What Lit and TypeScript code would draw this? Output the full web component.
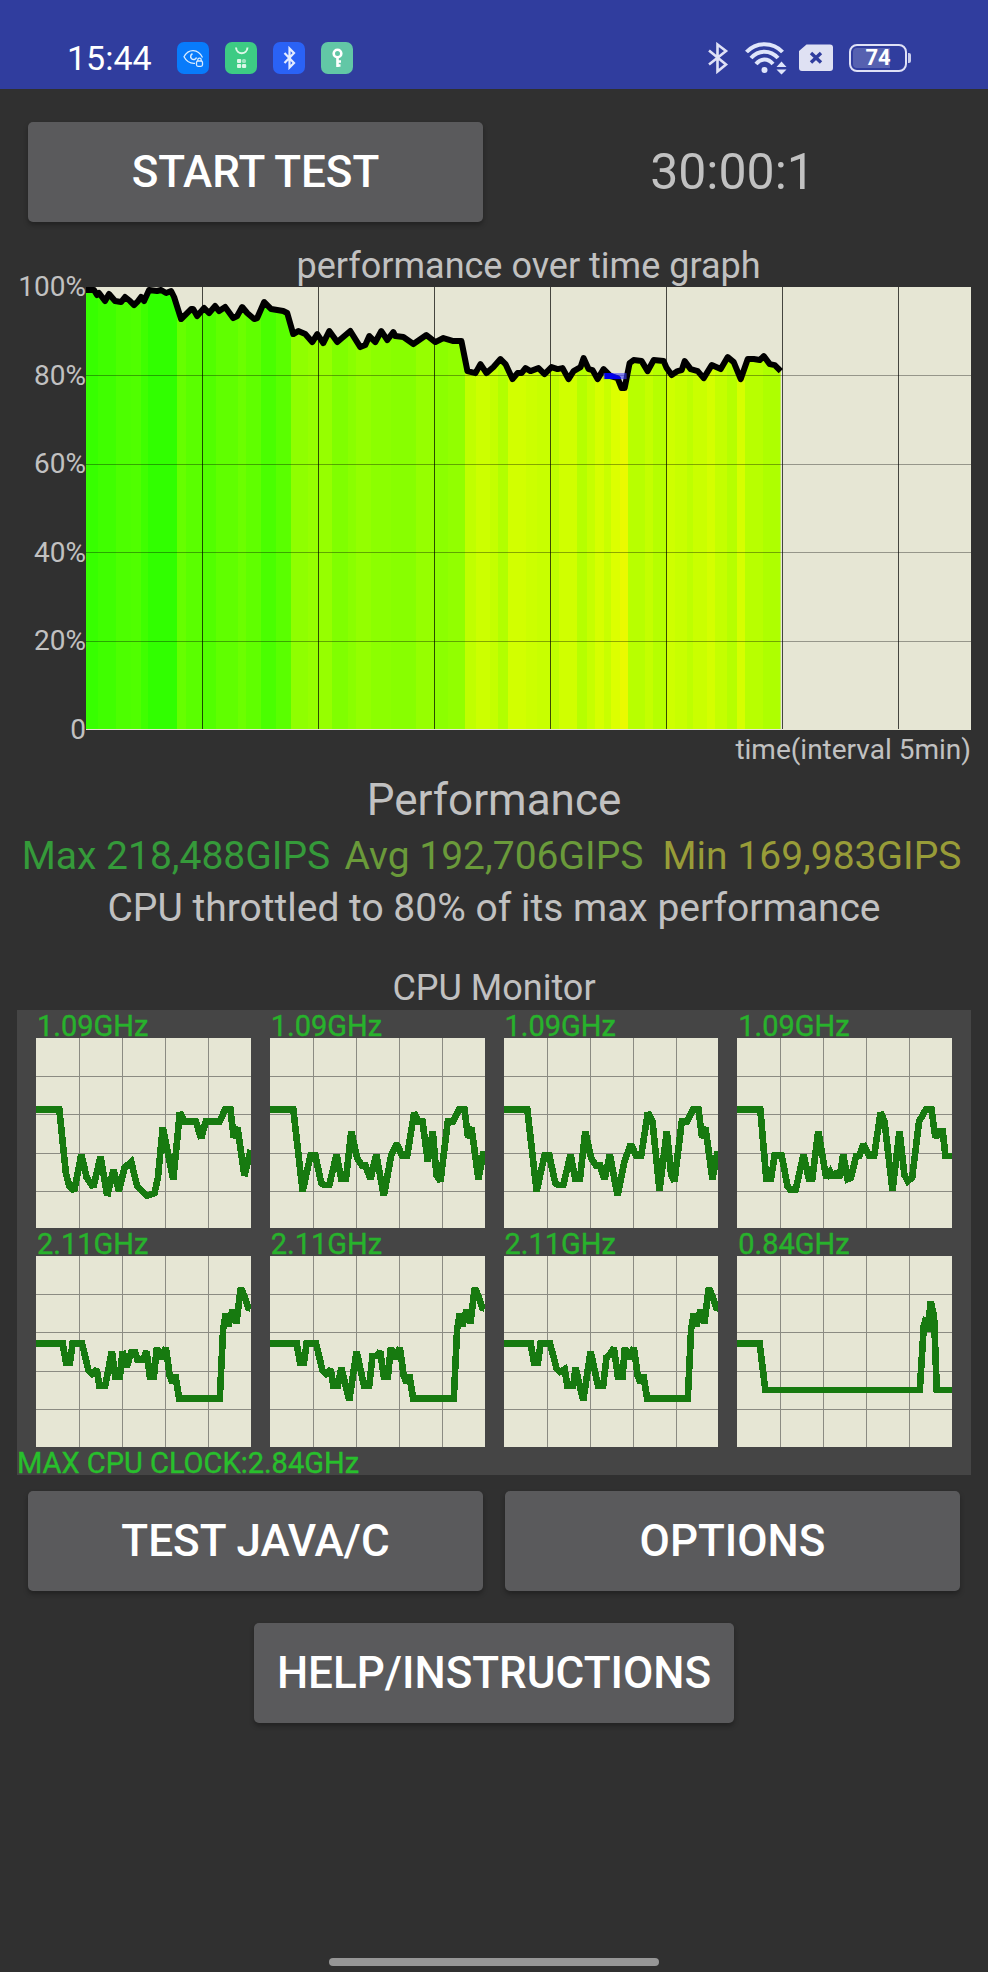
import { LitElement, html, svg, css } from "lit";
import { customElement, property } from "lit/decorators.js";

interface Core {
  clock: string;
  trace: string;
}

const TAIL_ROW1 = "534,250 550,250 568,214 584,214 595,300 605,268 626,424 640,350 645,350";
const TAIL_ROW2 =
  "363,276 374,308 390,276 402,362 410,380 418,356 430,428 552,428 562,220 570,172 578,210 590,162 602,202 615,96 626,120 638,156 645,158";

const CORES: Core[] = [
  {
    clock: "1.09GHz",
    trace:
      "0,214 70,214 90,408 100,444 115,459 136,350 152,418 172,448 194,356 214,474 233,396 249,460 266,390 286,372 304,446 332,474 356,466 366,420 381,268 412,426 432,224 446,250 480,250 496,302 510,250 552,250 568,214 584,214 594,300 605,268 626,414 642,348 645,350",
  },
  {
    clock: "1.09GHz",
    trace:
      "0,214 70,214 98,460 122,352 136,352 154,436 163,442 178,442 200,350 214,424 228,424 244,280 262,362 276,382 286,382 302,424 319,350 342,474 364,352 381,318 397,354 412,354 433,224 445,250 458,250 474,370 489,280 500,412 512,430 " +
      TAIL_ROW1,
  },
  {
    clock: "1.09GHz",
    trace:
      "0,214 70,214 98,460 122,352 136,352 154,436 163,442 178,442 200,350 214,424 228,424 244,280 262,362 276,382 288,382 302,424 318,350 341,474 362,370 381,318 397,354 412,354 432,224 446,250 467,458 489,280 502,412 512,430 " +
      TAIL_ROW1,
  },
  {
    clock: "1.09GHz",
    trace:
      "0,214 70,214 88,424 102,424 113,352 134,352 152,446 160,456 176,456 200,350 216,424 226,424 244,280 268,420 280,402 290,420 300,402 308,420 319,350 332,424 342,420 358,354 368,354 379,318 397,354 412,354 431,224 443,250 467,458 488,280 503,412 513,430 526,420 547,250 568,214 584,214 596,300 606,272 611,300 617,272 626,354 645,354",
  },
  {
    clock: "2.11GHz",
    trace:
      "0,262 80,262 90,320 102,320 110,262 138,262 158,345 168,354 182,340 190,388 208,388 228,286 238,362 252,362 260,286 272,334 286,290 298,290 304,310 322,310 332,286 342,362 354,362 " +
      TAIL_ROW2,
  },
  {
    clock: "2.11GHz",
    trace:
      "0,262 80,262 90,320 102,320 110,262 138,262 158,345 168,354 182,340 190,388 204,388 214,336 238,434 260,286 282,388 298,388 308,300 322,300 331,286 342,362 354,362 " +
      TAIL_ROW2,
  },
  {
    clock: "2.11GHz",
    trace:
      "0,262 80,262 90,320 102,320 110,262 138,262 158,338 168,348 182,340 190,388 208,388 215,336 238,434 260,286 282,388 298,388 308,304 318,296 330,276 342,362 356,362 " +
      TAIL_ROW2,
  },
  {
    clock: "0.84GHz",
    trace:
      "0,262 68,262 85,402 549,402 561,210 568,184 573,226 582,136 592,184 600,402 645,402",
  },
];

const PERFORMANCE =
  "0,3 8,3 11,8 13,6 19,14 23,7 29,14 35,15 39,10 44,14 48,18 52,14 55,10 58,14 63,3 71,4 75,3 80,6 85,4 88,10 95,32 99,28 105,22 107,22 111,29 118,21 123,26 129,19 133,24 139,20 147,31 151,29 156,20 161,26 168,32 171,31 178,15 185,22 197,24 201,26 207,47 212,44 219,47 226,55 231,47 237,56 243,44 251,55 264,44 274,60 279,58 283,49 289,55 295,44 301,53 307,45 309,49 317,50 327,57 340,48 349,55 357,51 367,54 375,54 381,84 389,86 394,77 400,86 407,80 414,72 419,77 426,92 431,86 435,86 439,81 444,84 452,81 458,87 465,80 471,82 476,81 482,92 487,84 494,80 497,71 502,82 506,83 511,92 517,82 524,89 531,91 535,101 538,101 543,76 547,73 555,74 561,84 567,73 577,74 580,81 585,88 591,84 595,83 598,74 604,82 611,84 617,91 625,78 634,82 641,70 647,75 654,92 661,72 667,72 673,73 677,69 683,77 688,78 694,84";

const BANDS: [number, string][] = [
  [0, "#37ff00"], [12, "#40ff00"], [30, "#4dff00"], [45, "#50ff00"], [55, "#3fff00"],
  [62, "#31ff00"], [91, "#66ff00"], [100, "#5aff00"], [116, "#52ff00"], [130, "#60ff00"],
  [152, "#6cff00"], [160, "#60ff00"], [175, "#4aff00"], [190, "#5aff00"], [205, "#8fff00"],
  [222, "#96ff00"], [246, "#80ff00"], [262, "#8aff00"], [270, "#94ff00"], [285, "#8cff00"],
  [305, "#88ff00"], [330, "#96ff00"], [348, "#8cff00"], [362, "#92ff00"], [379, "#c0ff00"],
  [390, "#ccff00"], [404, "#c4ff00"], [412, "#b2ff00"], [422, "#d2ff00"], [440, "#ccff00"],
  [450, "#c8ff00"], [465, "#c0ff00"], [472, "#d0ff00"], [490, "#b6ff00"], [500, "#c6ff00"],
  [508, "#d6ff00"], [517, "#c8ff00"], [524, "#dcff00"], [533, "#eafa00"], [541, "#b8ff00"],
  [558, "#c4ff00"], [566, "#b6ff00"], [580, "#ceff00"], [588, "#c8ff00"], [600, "#beff00"],
  [606, "#caff00"], [620, "#d4ff00"], [628, "#c4ff00"], [640, "#b6ff00"], [650, "#d6ff00"],
  [658, "#b8ff00"], [676, "#aeff00"],
];
const RUN_END = 694;

@customElement("performance-graph")
export class PerformanceGraph extends LitElement {
  static styles = css`
    :host {
      display: grid;
      grid-template-columns: 69px 1fr;
    }
    .scale {
      display: flex;
      flex-direction: column;
      justify-content: space-between;
      margin: -16px 0;
      text-align: right;
      font-size: 28px;
      line-height: 32px;
    }
    .plot {
      display: block;
      width: 100%;
      aspect-ratio: 2 / 1;
      background: #e6e6d4;
    }
    .title {
      grid-column: 2;
      font-size: 36px;
      line-height: 42px;
      font-weight: 400;
      margin: 0;
      text-align: center;
    }
    .axis {
      grid-column: 1 / -1;
      text-align: right;
      font-size: 28px;
      line-height: 40px;
    }
    .v {
      stroke: #000;
      stroke-opacity: 0.7;
    }
    .h {
      stroke: #000;
      stroke-opacity: 0.35;
    }
    .line {
      fill: none;
      stroke: #000;
      stroke-width: 6;
      stroke-linejoin: round;
    }
  `;

  render() {
    return html`
      <h2 class="title">performance over time graph</h2>
      <div class="scale">
        ${["100%", "80%", "60%", "40%", "20%", "0"].map((t) => html`<span>${t}</span>`)}
      </div>
      <svg class="plot" viewBox="0 0 884 442" preserveAspectRatio="none" role="img" aria-label="performance over time">
        <defs>
          <clipPath id="run">
            <polygon points="0,442 ${PERFORMANCE} 694,442"></polygon>
          </clipPath>
        </defs>
        <g clip-path="url(#run)" shape-rendering="crispEdges">
          ${BANDS.map(([x, color], i) => {
            const end = BANDS[i + 1]?.[0] ?? RUN_END;
            return svg`<rect x=${x} y="0" width=${end - x} height="442" fill=${color}></rect>`;
          })}
        </g>
        <g shape-rendering="crispEdges">
          ${[1, 2, 3, 4].map((n) => svg`<line class="h" x1="0" x2="884" y1=${n * 88.3 + 0.5} y2=${n * 88.3 + 0.5}></line>`)}
          ${[1, 2, 3, 4, 5, 6, 7].map((n) => svg`<line class="v" y1="0" y2="442" x1=${n * 115.8 + 0.5} x2=${n * 115.8 + 0.5}></line>`)}
        </g>
        <polyline class="line" points=${PERFORMANCE}></polyline>
        <rect x="517" y="86" width="23" height="6" fill="#3a3aff" fill-opacity="0.6"></rect>
        <polygon points="518,86 525,86 534,90 534,92 518,92" fill="#0000e8"></polygon>
      </svg>
      <div class="axis">time(interval 5min)</div>
    `;
  }
}

@customElement("core-graph")
export class CoreGraph extends LitElement {
  @property() clock = "";
  @property() trace = "";

  static styles = css`
    :host {
      display: block;
    }
    .clock {
      padding: 4px 0 0 1px;
      font-size: 29px;
      line-height: 24px;
      color: #28b22c;
      -webkit-text-stroke: 0.4px #28b22c;
    }
    .plot {
      display: block;
      width: 100%;
      aspect-ratio: 215 / 191;
      background: #e6e6d4;
    }
    .grid {
      stroke: #8b8b82;
      stroke-width: 3;
    }
    .line {
      fill: none;
      stroke: #177a10;
      stroke-width: 20;
      stroke-linejoin: miter;
      stroke-miterlimit: 2;
    }
  `;

  render() {
    return html`
      <div class="clock">${this.clock}</div>
      <svg class="plot" viewBox="0 0 645 573" preserveAspectRatio="none" role="img" aria-label="core clock history">
        <g class="grid" shape-rendering="crispEdges">
          ${[1, 2, 3, 4].map(
            (n) => svg`
              <line x1=${n * 129 + 1} x2=${n * 129 + 1} y1="0" y2="573"></line>
              <line y1=${n * 114.6 + 2} y2=${n * 114.6 + 2} x1="0" x2="645"></line>`
          )}
        </g>
        <polyline class="line" shape-rendering="crispEdges" points=${this.trace}></polyline>
      </svg>
    `;
  }
}

@customElement("status-bar")
export class StatusBar extends LitElement {
  static styles = css`
    :host {
      display: flex;
      align-items: center;
      gap: 16px;
      padding: 41px 77px 14px 67px;
      background: #303d9e;
      color: #fff;
    }
    .time {
      font-size: 34px;
      line-height: 32px;
      margin-right: 9px;
    }
    .app {
      display: block;
      width: 32px;
      height: 32px;
      border-radius: 7px;
    }
    .eye { background: #087bfb; }
    .store { background: #3dcb84; }
    .blue { background: #2a62f6; }
    .key { background: #62c7a6; }
    .system {
      display: flex;
      align-items: center;
      gap: 12px;
      margin-left: auto;
    }
    .system svg {
      display: block;
    }
    .battery {
      display: flex;
      align-items: center;
      gap: 1px;
      margin-left: 4px;
    }
    .cell {
      box-sizing: border-box;
      width: 58px;
      height: 28px;
      padding: 2px;
      border: 2px solid #dfe1f6;
      border-radius: 8px;
      font-size: 22px;
      line-height: 20px;
      font-weight: 700;
      text-align: center;
      background: linear-gradient(90deg, #5661b0 74%, transparent 74%) content-box;
    }
    .knob {
      width: 3px;
      height: 10px;
      border-radius: 0 2px 2px 0;
      background: #c9cdec;
    }
  `;

  render() {
    return html`
      <span class="time">15:44</span>
      <svg class="app eye" viewBox="0 0 32 32" fill="none" stroke="#d9ecff" stroke-width="1.3">
        <path d="M25.5 15.5C21 6.5 11.500 6.500 7 14.800C9.500 19.500 13.500 21.700 18 21.300"></path>
        <path d="M15.500 11.800a3 3 0 1 0 4 3.700" stroke-width="1.500"></path>
        <rect x="19.500" y="19" width="6" height="5.300" rx="1.500"></rect>
        <path d="M20.800 19v-1.200a1.700 1.700 0 0 1 3.400 0V19"></path>
      </svg>
      <svg class="app store" viewBox="0 0 32 32" fill="#dcf7e8">
        <path d="M11 5.500c.5 7.500 11 7.500 11.500 0" fill="none" stroke="#dcf7e8" stroke-width="2"></path>
        <rect x="12" y="17" width="4.200" height="4" rx="1"></rect>
        <rect x="17" y="17" width="4" height="4" rx="1.500" fill="#9fe6c2"></rect>
        <rect x="12" y="22" width="4.200" height="4" rx="1"></rect>
        <rect x="17" y="22" width="4.200" height="4" rx="1"></rect>
      </svg>
      <svg class="app blue" viewBox="0 0 32 32" fill="none" stroke="#e4ecff" stroke-width="2.200">
        <path d="M11.500 11l9.500 10-4.500 4.500V6.500l4.500 4.500-9.500 10"></path>
      </svg>
      <svg class="app key" viewBox="0 0 32 32" fill="none" stroke="#fff" stroke-width="2.600">
        <circle cx="16.500" cy="11.500" r="3.800"></circle>
        <path d="M16.500 15.500V25M16.500 19.500h3.500M16.500 23.500h3"></path>
      </svg>
      <div class="system">
        <svg width="25" height="32" viewBox="0 0 25 32" fill="none" stroke="#dfe1f6" stroke-width="2.600">
          <path d="M1 8.500l17 14-8.500 7V2.500l8.500 6.500L1 22.500"></path>
        </svg>
        <svg width="42" height="34" viewBox="0 0 42 34" fill="none" stroke="#dfe5fb" stroke-width="4">
          <path d="M1.500 11C11 .5 28 .5 37.500 11"></path>
          <path d="M6 17C13.500 8.500 25.500 8.500 33 17"></path>
          <path d="M11 23C16 17 23 17 28 23"></path>
          <circle cx="19.500" cy="29" r="3" fill="#dfe5fb" stroke="none"></circle>
          <path d="M31.500 26l5-5.500 5 5.500zM31.500 28.500l5 5 5-5z" fill="#dfe5fb" stroke="none"></path>
        </svg>
        <svg width="34" height="28" viewBox="0 0 34 28">
          <path d="M7.500.5H31a3 3 0 0 1 3 3V24a3 3 0 0 1-3 3H3a3 3 0 0 1-3-3V7z" fill="#dfe1f3"></path>
          <path d="M12 9l10 9.500M22 9l-10 9.500" stroke="#303d9e" stroke-width="3.400"></path>
        </svg>
        <div class="battery"><div class="cell">74</div><div class="knob"></div></div>
      </div>
    `;
  }
}

@customElement("app-root")
export class AppRoot extends LitElement {
  static styles = css`
    :host {
      display: flex;
      flex-direction: column;
      box-sizing: border-box;
      min-height: 100vh;
      padding-bottom: 6px;
      background: #303030;
      color: #c1c1c1;
      font-family: Roboto, sans-serif;
    }
    .pair {
      display: grid;
      grid-template-columns: 1fr 1fr;
      gap: 22px;
      align-items: center;
      padding: 0 28px;
    }
    .top {
      margin: 33px 0 23px;
    }
    .timer {
      font-size: 50px;
      line-height: 60px;
      text-align: center;
    }
    .button {
      height: 100px;
      padding: 0 23px;
      border: 0;
      border-radius: 5px;
      background: #5a5a5c;
      color: #fff;
      font-family: inherit;
      font-size: 44px;
      font-weight: 500;
      box-shadow: 0 3px 5px rgba(0, 0, 0, 0.3);
    }
    .section {
      margin: 0 17px;
    }
    .heading {
      margin: 0;
      font-size: 44px;
      line-height: 60px;
      font-weight: 400;
      text-align: center;
    }
    .stats {
      display: grid;
      grid-template-columns: repeat(3, 1fr);
    }
    .text {
      margin: 0;
      font-size: 39px;
      line-height: 52px;
      text-align: center;
      white-space: nowrap;
    }
    .max { color: #359a3a; }
    .avg { color: #6a9a3a; }
    .min { color: #989c38; }
    .subheading {
      margin: 32px 0 0;
      font-size: 36px;
      line-height: 44px;
      font-weight: 400;
      text-align: center;
    }
    .monitor {
      background: #454545;
    }
    .cores {
      display: grid;
      grid-template-columns: repeat(4, 1fr);
      column-gap: 19px;
      padding: 0 19px;
    }
    .clock {
      padding: 4px 0 0;
      font-size: 29px;
      line-height: 24px;
      color: #28bf2c;
      -webkit-text-stroke: 0.4px #28bf2c;
    }
    .bottom {
      margin: 16px 0 32px;
    }
    .help {
      align-self: center;
    }
    .home {
      align-self: center;
      width: 33.4%;
      height: 8px;
      margin-top: auto;
      border-radius: 4px;
      background: #969696;
    }
  `;

  render() {
    return html`
      <status-bar></status-bar>
      <div class="pair top">
        <button class="button" type="button">START TEST</button>
        <div class="timer">30:00:1</div>
      </div>
      <performance-graph class="section"></performance-graph>
      <section class="section">
        <h2 class="heading">Performance</h2>
        <div class="stats">
          <span class="text max">Max 218,488GIPS</span>
          <span class="text avg">Avg 192,706GIPS</span>
          <span class="text min">Min 169,983GIPS</span>
        </div>
        <p class="text">CPU throttled to 80% of its max performance</p>
      </section>
      <section class="section">
        <h2 class="subheading">CPU Monitor</h2>
        <div class="monitor">
          <div class="cores">
            ${CORES.map((c) => html`<core-graph .clock=${c.clock} .trace=${c.trace}></core-graph>`)}
          </div>
          <div class="clock">MAX CPU CLOCK:2.84GHz</div>
        </div>
      </section>
      <div class="pair bottom">
        <button class="button" type="button">TEST JAVA/C</button>
        <button class="button" type="button">OPTIONS</button>
      </div>
      <button class="button help" type="button">HELP/INSTRUCTIONS</button>
      <div class="home"></div>
    `;
  }
}
